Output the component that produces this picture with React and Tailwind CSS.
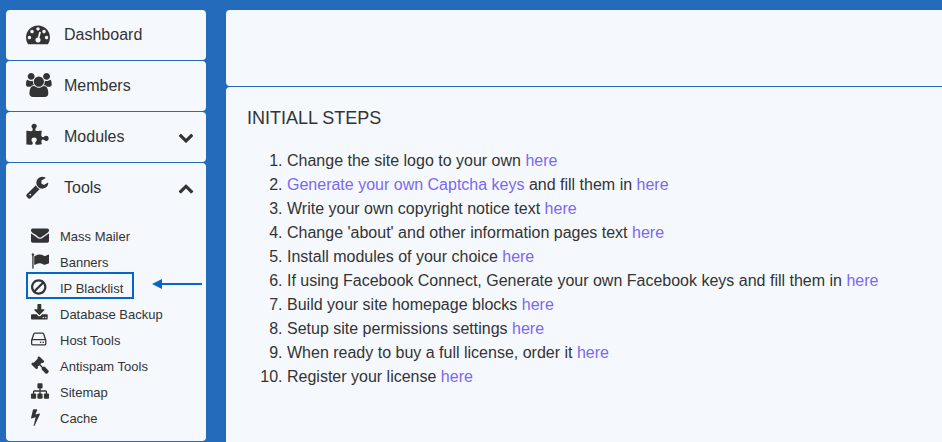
import { useState } from "react";

const ICONS = {
  dashboard: {
    box: "0 0 1792 1792",
    d: "M384 1152q0-53-37.5-90.5t-90.5-37.5-90.5 37.5-37.5 90.5 37.5 90.5 90.5 37.5 90.5-37.5 37.5-90.5zm192-448q0-53-37.5-90.5t-90.5-37.5-90.5 37.5-37.5 90.5 37.5 90.5 90.5 37.5 90.5-37.5 37.5-90.5zm428 481l101-382q6-26-7.5-48.5t-38.5-29.5-48 6.5-30 39.5l-101 382q-60 5-107 43.5t-63 98.5q-20 77 20 146t117 89 146-20 89-117q16-60-6-117t-72-91zm660-33q0-53-37.5-90.5t-90.5-37.5-90.5 37.5-37.5 90.5 37.5 90.5 90.5 37.5 90.5-37.5 37.5-90.5zm-640-640q0-53-37.5-90.5t-90.5-37.5-90.5 37.5-37.5 90.5 37.5 90.5 90.5 37.5 90.5-37.5 37.5-90.5zm448 192q0-53-37.5-90.5t-90.5-37.5-90.5 37.5-37.5 90.5 37.5 90.5 90.5 37.5 90.5-37.5 37.5-90.5zm320 448q0 261-141 483-19 29-54 29h-1402q-35 0-54-29-141-221-141-483 0-182 71-348t191-286 286-191 348-71 348 71 286 191 191 286 71 348z",
  },
  members: {
    box: "-64 0 1792 1792",
    d: "M529 896q-162 5-265 128h-134q-82 0-138-40.5t-56-118.5q0-353 124-353 6 0 43.5 21t97.5 42.5 119 21.5q67 0 133-23-5 37-5 66 0 139 81 256zm1071 637q0 120-73 189.5t-194 69.5h-874q-121 0-194-69.5t-73-189.5q0-53 3.5-103.5t14-109 26.5-108.5 43-97.5 62-81 85.5-53.5 111.5-20q10 0 43 21.5t73 48 107 48 135 21.5 135-21.5 107-48 73-48 43-21.5q61 0 111.5 20t85.5 53.5 62 81 43 97.5 26.5 108.5 14 109 3.5 103.5zm-1024-1277q0 106-75 181t-181 75-181-75-75-181 75-181 181-75 181 75 75 181zm704 384q0 159-112.5 271.5t-271.5 112.5-271.5-112.5-112.5-271.5 112.5-271.5 271.5-112.5 271.5 112.5 112.5 271.5zm576 225q0 78-56 118.5t-138 40.5h-134q-103-123-265-128 81-117 81-256 0-29-5-66 66 23 133 23 59 0 119-21.5t97.5-42.5 43.5-21q124 0 124 353zm-128-609q0 106-75 181t-181 75-181-75-75-181 75-181 181-75 181 75 75 181z",
  },
  modules: {
    box: "64 0 1792 1792",
    d: "M1755 1083q0 81-44.5 135t-123.5 54q-41 0-77.5-17.5t-59-38-56.5-38-71-17.5q-110 0-110 124 0 39 16 115t15 115v5q-22 0-33 1-34 3-97.5 11.5t-115.5 13.5-98 5q-61 0-103-26.5t-42-83.5q0-37 17.5-71t38-56.5 38-59 17.5-77.5q0-79-54-123.5t-135-44.5q-84 0-143 45.5t-59 127.5q0 43 15 83t33.5 64.5 33.5 53 15 50.5q0 45-46 89-37 35-117 35-95 0-245-24-9-2-27.5-4t-27.5-4l-13-2q-1 0-3-1-2 0-2-1v-1024q2 1 17.5 3.5t34 5 21.5 3.5q150 24 245 24 80 0 117-35 46-44 46-89 0-22-15-50.5t-33.5-53-33.5-64.5-15-83q0-82 59-127.5t144-45.5q80 0 134 44.5t54 123.5q0 41-17.5 77.5t-38 59-38 56.5-17.5 71q0 57 42 83.5t103 26.5q64 0 180-15t163-17v2q-1 2-3.5 17.5t-5 34-3.5 21.5q-24 150-24 245 0 80 35 117 44 46 89 46 22 0 50.5-15t53-33.5 64.5-33.5 83-15q82 0 127.5 59t45.5 143z",
  },
  tools: {
    box: "64 0 1792 1792",
    d: "M448 1472q0-26-19-45t-45-19-45 19-19 45 19 45 45 19 45-19 19-45zm644-420l-682 682q-37 37-90 37-52 0-91-37l-106-108q-38-36-38-90 0-53 38-91l681-681q39 98 114.5 173.5t173.5 114.5zm634-435q0 39-23 106-47 134-164.5 217.5t-258.5 83.5q-185 0-316.5-131.5t-131.5-316.5 131.5-316.5 316.5-131.5q58 0 121.5 16.5t107.5 46.5q16 11 16 28t-16 28l-293 169v224l193 107q5-3 79-48.5t135.5-81 70.5-35.5q15 0 23.5 10t8.5 25z",
  },
  envelope: {
    box: "0 0 1792 1792",
    d: "M1792 710v794q0 66-47 113t-113 47h-1472q-66 0-113-47t-47-113v-794q44 49 101 87 362 246 497 345 57 42 92.5 65.5t94.5 48 110 24.5h2q51 0 110-24.5t94.5-48 92.5-65.5q170-123 498-345 57-39 100-87zm0-294q0 79-49 151t-122 123q-376 261-468 325-10 7-42.5 31t-54 38.5-52 32.5-57.5 27-50 9h-2q-23 0-50-9t-57.5-27-52-32.5-54-38.5-42.5-31q-91-64-262-182.5t-205-142.5q-62-42-117-115.5t-55-136.5q0-78 41.5-130t118.5-52h1472q65 0 112.5 47t47.5 113z",
  },
  flag: {
    box: "0 0 1792 1792",
    d: "M320 256q0 72-64 110v1266q0 13-9.5 22.5t-22.5 9.5h-64q-13 0-22.5-9.5t-9.5-22.5v-1266q-64-38-64-110 0-53 37.5-90.5t90.5-37.5 90.5 37.5 37.5 90.5zm1472 64v763q0 25-12.5 38.5t-39.5 27.5q-215 116-369 116-61 0-123.5-22t-108.5-48-115.5-48-142.5-22q-192 0-464 146-17 9-33 9-26 0-45-19t-19-45v-742q0-32 31-55 21-14 79-43 236-120 421-120 107 0 200 29t219 88q38 19 88 19 54 0 117.5-21t110-47 88-47 54.5-21q26 0 45 19t19 45z",
  },
  ban: {
    box: "128 0 1792 1792",
    d: "M1440 893q0-161-87-295l-754 753q137 89 297 89 111 0 211.5-43.5t173.5-116.5 116-174.5 43-212.5zm-999 299l755-754q-135-91-300-91-148 0-273 73t-198 199-73 274q0 162 89 299zm1223-299q0 157-61 300t-163.5 246-245 164-298.5 61-298.5-61-245-164-163.5-246-61-300 61-299.5 163.5-245.5 245-164 298.5-61 298.5 61 245 164 163.5 245.5 61 299.5z",
  },
  download: {
    box: "64 0 1792 1792",
    d: "M1344 1344q0-26-19-45t-45-19-45 19-19 45 19 45 45 19 45-19 19-45zm256 0q0-26-19-45t-45-19-45 19-19 45 19 45 45 19 45-19 19-45zm128-224v320q0 40-28 68t-68 28h-1472q-40 0-68-28t-28-68v-320q0-40 28-68t68-28h465l135 136q58 56 136 56t136-56l136-136h464q40 0 68 28t28 68zm-325-569q17 41-14 70l-448 448q-18 19-45 19t-45-19l-448-448q-31-29-14-70 17-39 59-39h256v-448q0-26 19-45t45-19h256q26 0 45 19t19 45v448h256q42 0 59 39z",
  },
  hdd: {
    box: "128 0 1792 1792",
    d: "M1168 1216q0 33-23.5 56.5t-56.5 23.5-56.5-23.5-23.5-56.5 23.5-56.5 56.5-23.5 56.5 23.5 23.5 56.5zm256 0q0 33-23.5 56.5t-56.5 23.5-56.5-23.5-23.5-56.5 23.5-56.5 56.5-23.5 56.5 23.5 23.5 56.5zm112 160v-320q0-13-9.5-22.5t-22.5-9.5h-1216q-13 0-22.5 9.5t-9.5 22.5v320q0 13 9.5 22.5t22.5 9.5h1216q13 0 22.5-9.5t9.5-22.5zm-1230-480h1180l-157-482q-4-13-16-21.5t-26-8.5h-782q-14 0-26 8.5t-16 21.5zm1358 160v320q0 66-47 113t-113 47h-1216q-66 0-113-47t-47-113v-320q0-25 16-75l197-606q17-53 63-86t101-33h782q55 0 101 33t63 86l197 606q16 50 16 75z",
  },
  gavel: {
    box: "0 0 1792 1792",
    d: "M1771 1536q0 53-37 90l-107 108q-39 37-91 37-53 0-90-37l-363-364q-38-36-38-90 0-53 43-96l-256-256-126 126q-14 14-34 14t-34-14q2 2 12.5 12t12.5 13 10 11.5 10 13.5 6 13.5 5.5 16.5 1.5 18q0 38-28 68-3 3-16.5 18t-19 20.5-18.5 16.5-22 15.5-22 9-26 4.5q-40 0-68-28l-408-408q-28-28-28-68 0-13 4.5-26t9-22 15.5-22 16.5-18.5 20.5-19 18-16.5q30-28 68-28 10 0 18 1.5t16.5 5.5 13.5 6 13.5 10 11.5 10 13 12.5 12 12.5q-14-14-14-34t14-34l348-348q14-14 34-14t34 14q-2-2-12.5-12t-12.5-13-10-11.5-10-13.5-6-13.5-5.5-16.5-1.5-18q0-38 28-68 3-3 16.5-18t19-20.5 18.5-16.5 22-15.5 22-9 26-4.5q40 0 68 28l408 408q28 28 28 68 0 13-4.5 26t-9 22-15.5 22-16.5 18.5-20.5 19-18 16.5q-30 28-68 28-10 0-18-1.5t-16.5-5.5-13.5-6-13.5-10-11.5-10-13-12.5-12-12.5q14 14 14 34t-14 34l-126 126 256 256q43-43 96-43 52 0 91 37l363 363q37 39 37 91z",
  },
  sitemap: {
    box: "0 0 1792 1792",
    d: "M1792 1248v320q0 40-28 68t-68 28h-320q-40 0-68-28t-28-68v-320q0-40 28-68t68-28h96v-192h-512v192h96q40 0 68 28t28 68v320q0 40-28 68t-68 28h-320q-40 0-68-28t-28-68v-320q0-40 28-68t68-28h96v-192h-512v192h96q40 0 68 28t28 68v320q0 40-28 68t-68 28h-320q-40 0-68-28t-28-68v-320q0-40 28-68t68-28h96v-192q0-52 38-90t90-38h512v-192h-96q-40 0-68-28t-28-68v-320q0-40 28-68t68-28h320q40 0 68 28t28 68v320q0 40-28 68t-68 28h-96v192h512q52 0 90 38t38 90v192h96q40 0 68 28t28 68z",
  },
  bolt: {
    box: "448 0 1792 1792",
    d: "M1333 566q18 20 7 44l-540 1157q-13 25-42 25-4 0-14-2-17-5-25.5-19t-4.5-30l197-808-406 101q-4 1-12 1-18 0-31-11-18-15-13-39l201-825q4-14 16-23t28-9h328q19 0 32 12.5t13 29.5q0 8-5 18l-171 463 396-98q8-2 12-2 19 0 34 15z",
  },
  chevronDown: {
    box: "0 0 1792 1792",
    d: "M1683 808l-742 741q-19 19-45 19t-45-19l-742-741q-19-19-19-45.5t19-45.5l166-165q19-19 45-19t45 19l531 531 531-531q19-19 45-19t45 19l166 165q19 19 19 45.5t-19 45.5z",
  },
  chevronUp: {
    box: "0 0 1792 1792",
    d: "M1683 1331l-166 165q-19 19-45 19t-45-19l-531-531-531 531q-19 19-45 19t-45-19l-166-165q-19-19-19-45.5t19-45.5l742-741q19-19 45-19t45 19l742 741q19 19 19 45.5t-19 45.5z",
  },
};

const TOOLS = [
  { icon: "envelope", label: "Mass Mailer" },
  { icon: "flag", label: "Banners" },
  { icon: "ban", label: "IP Blacklist", marked: true },
  { icon: "download", label: "Database Backup" },
  { icon: "hdd", label: "Host Tools" },
  { icon: "gavel", label: "Antispam Tools" },
  { icon: "sitemap", label: "Sitemap" },
  { icon: "bolt", label: "Cache" },
];

const STEPS = [
  { text: "Change the site logo to your own" },
  { lead: "Generate your own Captcha keys", text: " and fill them in" },
  { text: "Write your own copyright notice text" },
  { text: "Change 'about' and other information pages text" },
  { text: "Install modules of your choice" },
  { text: "If using Facebook Connect, Generate your own Facebook keys and fill them in" },
  { text: "Build your site homepage blocks" },
  { text: "Setup site permissions settings" },
  { text: "When ready to buy a full license, order it" },
  { text: "Register your license" },
];

function Icon({ name, className }) {
  const icon = ICONS[name];
  return (
    <svg
      viewBox={icon.box}
      fill="currentColor"
      aria-hidden="true"
      className={`shrink-0 overflow-visible ${className}`}
    >
      <path d={icon.d} />
    </svg>
  );
}

function MenuLink({ icon, label }) {
  return (
    <a href="#" className="flex items-center gap-[14px] h-[50px] px-5 rounded bg-[#f5f9fe]">
      <Icon name={icon} className="size-6 mb-[2px]" />
      {label}
    </a>
  );
}

function MenuGroup({ icon, label, defaultOpen = false, children }) {
  const [open, setOpen] = useState(defaultOpen);

  return (
    <div className="rounded bg-[#f5f9fe]">
      <button
        type="button"
        aria-expanded={open}
        onClick={() => setOpen(!open)}
        className="flex items-center gap-[14px] w-full h-[50px] pl-5 pr-3 text-left"
      >
        <Icon name={icon} className="size-6 mb-[2px]" />
        <span className="flex-1">{label}</span>
        <Icon name={open ? "chevronUp" : "chevronDown"} className="size-4" />
      </button>
      {open && children}
    </div>
  );
}

export default function App() {
  return (
    <div className="flex gap-5 min-h-screen pt-[10px] pl-[6px] bg-[#256bbb] text-[#333] text-base font-['Liberation_Sans',Arial,sans-serif]">
      <nav className="flex flex-col gap-px w-[200px] shrink-0">
        <MenuLink icon="dashboard" label="Dashboard" />
        <MenuLink icon="members" label="Members" />
        <MenuGroup icon="modules" label="Modules" />
        <MenuGroup icon="tools" label="Tools" defaultOpen>
          <ul className="pt-[11px] pb-[9px] text-[13px]">
            {TOOLS.map((tool) => (
              <li key={tool.label} className="relative">
                <a href="#" className="flex items-center h-[26px] pl-[25px] gap-[11px]">
                  <Icon name={tool.icon} className="size-[18px] mb-1" />
                  {tool.label}
                </a>
                {tool.marked && (
                  <>
                    <span className="absolute left-5 -top-1 w-[108px] h-[27px] border-2 border-[#0366c8] pointer-events-none" />
                    <svg
                      viewBox="0 0 50 10"
                      aria-hidden="true"
                      className="absolute right-1 top-[3px] w-[50px] h-[10px] text-[#0366c8]"
                    >
                      <path d="M0 5L10 0v10z" fill="currentColor" />
                      <path d="M9 5h41" stroke="currentColor" strokeWidth="2" />
                    </svg>
                  </>
                )}
              </li>
            ))}
          </ul>
        </MenuGroup>
      </nav>

      <main className="flex flex-col gap-px flex-1 min-w-0">
        <div className="h-[76px] rounded-l bg-[#f5f9fe]" />
        <section className="flex-1 pt-[19px] px-[21px] pb-5 rounded-tl bg-[#f5f9fe]">
          <h1 className="text-lg leading-6">INITIALL STEPS</h1>
          <ol className="mt-[19px] pl-10 list-decimal leading-6">
            {STEPS.map((step) => (
              <li key={step.text}>
                {step.lead && (
                  <a href="#" className="text-[#7b68ee]">
                    {step.lead}
                  </a>
                )}
                {step.text}{" "}
                <a href="#" className="text-[#7b68ee]">
                  here
                </a>
              </li>
            ))}
          </ol>
        </section>
      </main>
    </div>
  );
}
